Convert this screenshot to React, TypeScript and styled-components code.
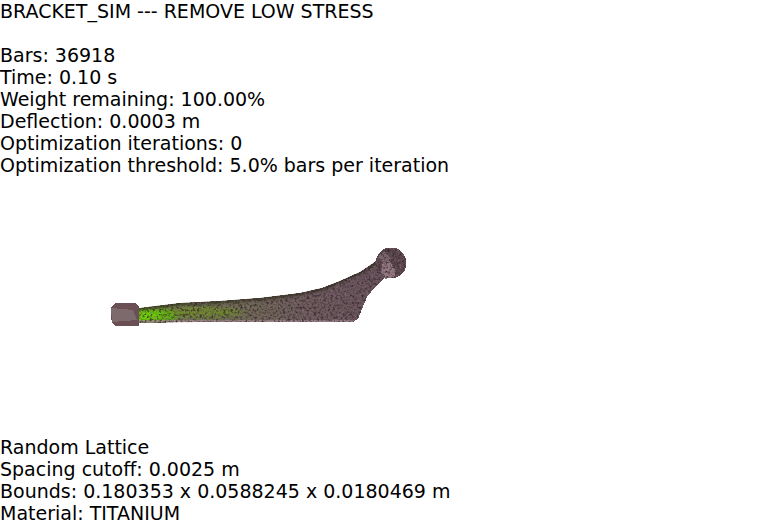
import React from "react";
import styled, { createGlobalStyle } from "styled-components";

const GlobalStyle = createGlobalStyle`
  html, body {
    margin: 0;
    background: #fff;
  }
`;

const Page = styled.div`
  box-sizing: border-box;
  width: 782px;
  height: 525px;
  padding-bottom: 1px;
  display: flex;
  flex-direction: column;
  overflow: hidden;
  color: #000;
  font-family: "DejaVu Sans", sans-serif;
  font-size: 19px;
  line-height: 22px;
`;

const TextBlock = styled.div`
  white-space: pre;
`;

const Line = styled.div`
  height: 22px;
`;

const Viewport = styled.div`
  flex: 1;
  min-height: 0;
`;

const BracketSvg = styled.svg`
  display: block;
`;

const infoLines = [
  "BRACKET_SIM --- REMOVE LOW STRESS",
  "",
  "Bars: 36918",
  "Time: 0.10 s",
  "Weight remaining: 100.00%",
  "Deflection: 0.0003 m",
  "Optimization iterations: 0",
  "Optimization threshold: 5.0% bars per iteration",
];

const latticeLines = [
  "Random Lattice",
  "Spacing cutoff: 0.0025 m",
  "Bounds: 0.180353 x 0.0588245 x 0.0180469 m",
  "Material: TITANIUM",
];

const topEdge =
  "M131 309 L140 308 L180 303 L220 301 L260 298 L300 293 L322 288 L340 281 L360 272 L372 264 L380 258";

const beamOutline =
  topEdge + " L392 272 L383 279 L376 286 L367 297 L362 309 L358 319 L353 322 L300 322 L200 322 L131 323 Z";

const Bracket: React.FC = () => (
  <BracketSvg width="782" height="260" viewBox="0 176 782 260" shapeRendering="crispEdges">
    <defs>
      <linearGradient id="beam" x1="0" y1="0" x2="1" y2="0">
        <stop offset="0" stopColor="#6f8f38" />
        <stop offset="0.2" stopColor="#6e7a4a" />
        <stop offset="0.45" stopColor="#6d6853" />
        <stop offset="0.68" stopColor="#6c5b5c" />
        <stop offset="1" stopColor="#64515a" />
      </linearGradient>
      <filter id="soft" x="-30%" y="-60%" width="160%" height="220%">
        <feGaussianBlur stdDeviation="3 1.5" />
      </filter>
      <filter id="edge" x="-5%" y="-30%" width="110%" height="160%">
        <feGaussianBlur stdDeviation="1.2" />
      </filter>
      <filter id="grain" x="0" y="0" width="100%" height="100%" colorInterpolationFilters="sRGB">
        <feTurbulence type="fractalNoise" baseFrequency="0.42" numOctaves="2" seed="7" result="noise" />
        <feColorMatrix
          in="noise"
          type="matrix"
          values="0 0 0 0 0.22  0 0 0 0 0.16  0 0 0 0 0.18  3 0 0 0 -1.4"
          result="dark"
        />
        <feComposite in="dark" in2="SourceAlpha" operator="in" result="darkGrain" />
        <feColorMatrix
          in="noise"
          type="matrix"
          values="0 0 0 0 0.55  0 0 0 0 0.4  0 0 0 0 0.5  0 3 0 0 -1.7"
          result="light"
        />
        <feComposite in="light" in2="SourceAlpha" operator="in" result="lightGrain" />
        <feMerge>
          <feMergeNode in="SourceGraphic" />
          <feMergeNode in="darkGrain" />
          <feMergeNode in="lightGrain" />
        </feMerge>
      </filter>
      <clipPath id="beamClip">
        <path d={beamOutline} />
      </clipPath>
    </defs>
    <g filter="url(#grain)">
      <path d={beamOutline} fill="url(#beam)" />
      <g clipPath="url(#beamClip)">
        <ellipse cx="152" cy="315" rx="26" ry="7" fill="#62b80a" filter="url(#soft)" />
        <ellipse cx="146" cy="316" rx="12" ry="4" fill="#70d800" filter="url(#soft)" />
        <ellipse cx="205" cy="312" rx="38" ry="5" fill="#6d8f24" opacity="0.7" filter="url(#soft)" />
        <path d={topEdge} fill="none" stroke="#2a2818" strokeWidth="5" opacity="0.7" filter="url(#edge)" />
        <path d="M131 322 L354 321" fill="none" stroke="#a58d92" strokeWidth="5" opacity="0.75" filter="url(#edge)" />
      </g>
    </g>
    <path d="M115 303 L135 303 L139 307 L139 326 L115 326 L112 323 L111 317 L111 308 Z" fill="#6a4f55" />
    <path d="M111 308 L133 310 L137 320 L112 322 Z" fill="#7d6a6c" />
    <g filter="url(#grain)">
      <circle cx="391" cy="263" r="15.5" fill="#5a474c" />
      <path d="M384 256 L391 263 L396 272 L394 277 L385 279 L381 272 Z" fill="#937a80" />
      <path d="M378 256 L384 252 L390 258 L384 264 Z" fill="#7a656e" />
    </g>
  </BracketSvg>
);

const App: React.FC = () => (
  <>
    <GlobalStyle />
    <Page>
      <TextBlock>
        {infoLines.map((text, i) => (
          <Line key={i}>{text}</Line>
        ))}
      </TextBlock>
      <Viewport>
        <Bracket />
      </Viewport>
      <TextBlock>
        {latticeLines.map((text) => (
          <Line key={text}>{text}</Line>
        ))}
      </TextBlock>
    </Page>
  </>
);

export default App;
